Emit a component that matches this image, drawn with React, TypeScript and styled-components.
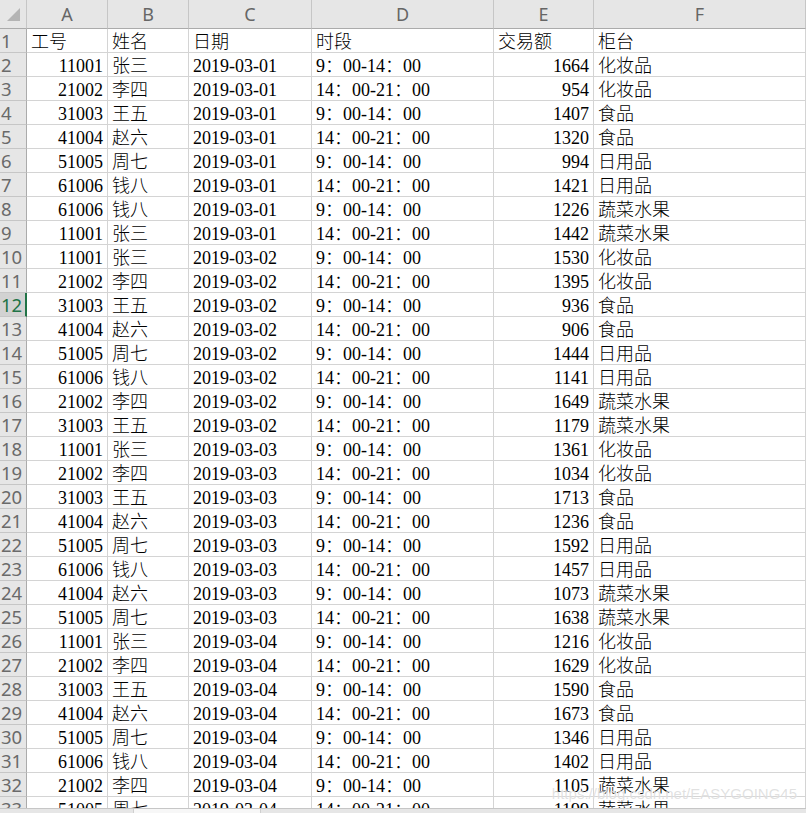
import React from "react";
import styled, { createGlobalStyle, css } from "styled-components";

const GlobalStyle = createGlobalStyle`
  html, body {
    margin: 0;
    padding: 0;
    background: #ffffff;
    overflow: hidden;
  }
`;

const COLS = "27px 81px 81px 123px 182px 100px 1fr";

const Page = styled.div`
  position: relative;
  width: 806px;
  height: 813px;
  display: flex;
  flex-direction: column;
  overflow: hidden;
`;

const Sheet = styled.div`
  height: 808px;
  overflow: hidden;
  display: flex;
  flex-direction: column;
`;

const HeaderRow = styled.div`
  display: grid;
  grid-template-columns: ${COLS};
  height: 29px;
  flex: none;
  background: #e6e6e6;
`;

const Corner = styled.div`
  position: relative;
  box-sizing: border-box;
  border-right: 1px solid #c6c6c6;
  border-bottom: 1px solid #ababab;
  &::after {
    content: "";
    position: absolute;
    left: 7px;
    top: 8px;
    width: 13px;
    height: 13px;
    background: #b4b4b4;
    clip-path: polygon(100% 0, 100% 100%, 0 100%);
  }
`;

const ColHead = styled.div`
  box-sizing: border-box;
  border-right: 1px solid #c6c6c6;
  border-bottom: 1px solid #ababab;
  display: flex;
  align-items: center;
  justify-content: center;
  font-family: "Noto Sans", "Liberation Sans", sans-serif;
  font-size: 18px;
  color: #666666;
  padding-bottom: 1px;
`;

const Row = styled.div`
  display: grid;
  grid-template-columns: ${COLS};
  height: 24px;
  flex: none;
`;

const RowHead = styled.div<{ $selected?: boolean }>`
  box-sizing: border-box;
  background: #e6e6e6;
  border-right: 1px solid #ababab;
  border-bottom: 1px solid #c6c6c6;
  display: flex;
  align-items: center;
  padding-left: 1px;
  font-family: "Noto Sans", "Liberation Sans", sans-serif;
  font-size: 18.5px;
  color: #6a6a6a;
  overflow: hidden;
  white-space: nowrap;
  ${(p) =>
    p.$selected &&
    css`
      background: #d2d2d2;
      color: #217346;
      border-right: 2px solid #217346;
    `}
`;

const Cell = styled.div<{ $align?: "left" | "right" }>`
  box-sizing: border-box;
  border-right: 1px solid #d4d4d4;
  border-bottom: 1px solid #d4d4d4;
  padding: 4px 4px 0 4px;
  line-height: 19px;
  font-family: "Liberation Serif", "Noto Sans CJK SC", serif;
  font-size: 18px;
  font-weight: 300;
  color: #000000;
  white-space: nowrap;
  overflow: hidden;
  text-align: ${(p) => (p.$align === "right" ? "right" : "left")};
`;

const BottomBar = styled.div`
  flex: 1;
  display: flex;
  border-top: 1px solid #c6c6c6;
  background: #e6e6e6;
`;

const BarPiece = styled.div<{ $w: number; $light?: boolean }>`
  width: ${(p) => p.$w}px;
  flex: none;
  background: ${(p) => (p.$light ? "#f7f7f7" : "#e6e6e6")};
  ${(p) =>
    p.$light &&
    css`
      border-left: 1px solid #cfcfcf;
      border-right: 1px solid #cfcfcf;
    `}
`;

const Watermark = styled.div`
  position: absolute;
  right: 9px;
  top: 785px;
  font-family: "Liberation Sans", Arial, sans-serif;
  font-size: 15px;
  line-height: 18px;
  color: rgba(175, 175, 175, 0.38);
  text-shadow: 0 0 1px rgba(255, 255, 255, 0.9);
  pointer-events: none;
  white-space: nowrap;
`;

const M = "9：00-14：00";
const A = "14：00-21：00";

type Rec = [string, string, string, string, string, string];

const data: Rec[] = [
  ["11001", "张三", "2019-03-01", M, "1664", "化妆品"],
  ["21002", "李四", "2019-03-01", A, "954", "化妆品"],
  ["31003", "王五", "2019-03-01", M, "1407", "食品"],
  ["41004", "赵六", "2019-03-01", A, "1320", "食品"],
  ["51005", "周七", "2019-03-01", M, "994", "日用品"],
  ["61006", "钱八", "2019-03-01", A, "1421", "日用品"],
  ["61006", "钱八", "2019-03-01", M, "1226", "蔬菜水果"],
  ["11001", "张三", "2019-03-01", A, "1442", "蔬菜水果"],
  ["11001", "张三", "2019-03-02", M, "1530", "化妆品"],
  ["21002", "李四", "2019-03-02", A, "1395", "化妆品"],
  ["31003", "王五", "2019-03-02", M, "936", "食品"],
  ["41004", "赵六", "2019-03-02", A, "906", "食品"],
  ["51005", "周七", "2019-03-02", M, "1444", "日用品"],
  ["61006", "钱八", "2019-03-02", A, "1141", "日用品"],
  ["21002", "李四", "2019-03-02", M, "1649", "蔬菜水果"],
  ["31003", "王五", "2019-03-02", A, "1179", "蔬菜水果"],
  ["11001", "张三", "2019-03-03", M, "1361", "化妆品"],
  ["21002", "李四", "2019-03-03", A, "1034", "化妆品"],
  ["31003", "王五", "2019-03-03", M, "1713", "食品"],
  ["41004", "赵六", "2019-03-03", A, "1236", "食品"],
  ["51005", "周七", "2019-03-03", M, "1592", "日用品"],
  ["61006", "钱八", "2019-03-03", A, "1457", "日用品"],
  ["41004", "赵六", "2019-03-03", M, "1073", "蔬菜水果"],
  ["51005", "周七", "2019-03-03", A, "1638", "蔬菜水果"],
  ["11001", "张三", "2019-03-04", M, "1216", "化妆品"],
  ["21002", "李四", "2019-03-04", A, "1629", "化妆品"],
  ["31003", "王五", "2019-03-04", M, "1590", "食品"],
  ["41004", "赵六", "2019-03-04", A, "1673", "食品"],
  ["51005", "周七", "2019-03-04", M, "1346", "日用品"],
  ["61006", "钱八", "2019-03-04", A, "1402", "日用品"],
  ["21002", "李四", "2019-03-04", M, "1105", "蔬菜水果"],
  ["51005", "周七", "2019-03-04", A, "1199", "蔬菜水果"],
];

const letters = ["A", "B", "C", "D", "E", "F"];
const titles = ["工号", "姓名", "日期", "时段", "交易额", "柜台"];

export default function App() {
  return (
    <>
      <GlobalStyle />
      <Page>
        <Sheet>
          <HeaderRow>
            <Corner />
            {letters.map((l) => (
              <ColHead key={l}>{l}</ColHead>
            ))}
          </HeaderRow>
          <Row>
            <RowHead>1</RowHead>
            {titles.map((t) => (
              <Cell key={t}>{t}</Cell>
            ))}
          </Row>
          {data.map((r, i) => {
            const n = i + 2;
            return (
              <Row key={n}>
                <RowHead $selected={n === 12}>{n}</RowHead>
                <Cell $align="right">{r[0]}</Cell>
                <Cell>{r[1]}</Cell>
                <Cell>{r[2]}</Cell>
                <Cell>{r[3]}</Cell>
                <Cell $align="right">{r[4]}</Cell>
                <Cell>{r[5]}</Cell>
              </Row>
            );
          })}
        </Sheet>
        <BottomBar>
          <BarPiece $w={133} />
          <BarPiece $w={126} $light />
        </BottomBar>
        <Watermark>https://blog.csdn.net/EASYGOING45</Watermark>
      </Page>
    </>
  );
}
